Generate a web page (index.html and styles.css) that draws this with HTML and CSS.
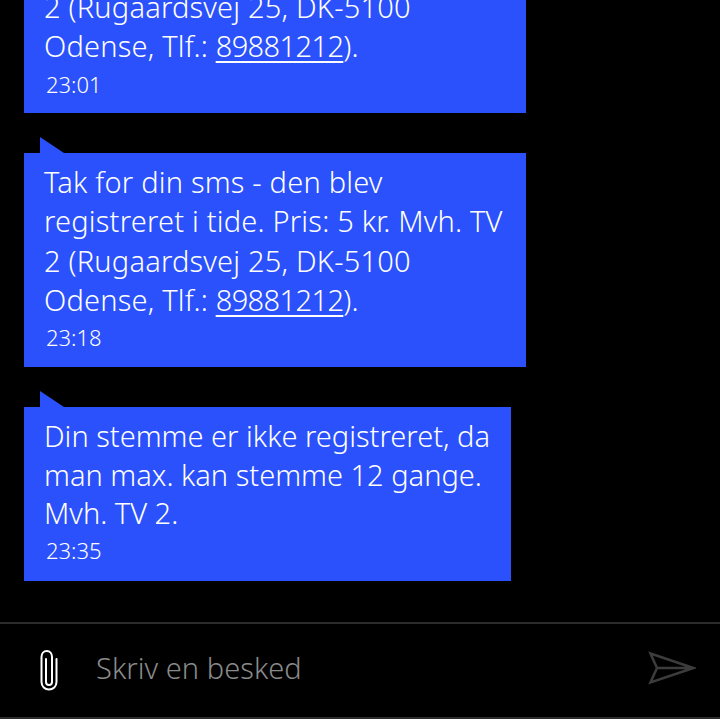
FILE: index.html
```html
<!DOCTYPE html>
<html lang="da">
<head>
<meta charset="utf-8">
<title>Beskeder</title>
<link rel="stylesheet" href="styles.css">
</head>
<body>
<main class="screen">
  <section class="thread">
    <article class="bubble partial">
      <p class="text">2 (Rugaardsvej 25, DK-5100<br>Odense, Tlf.: <span class="link">89881212</span>).</p>
      <time class="time">23:01</time>
    </article>
    <article class="bubble wide">
      <p class="text">Tak for din sms - den blev<br>registreret i tide. Pris: 5 kr. Mvh. TV<br>2 (Rugaardsvej 25, DK-5100<br>Odense, Tlf.: <span class="link">89881212</span>).</p>
      <time class="time">23:18</time>
    </article>
    <article class="bubble narrow">
      <p class="text">Din stemme er ikke registreret, da<br>man max. kan stemme 12 gange.<br>Mvh. TV 2.</p>
      <time class="time">23:35</time>
    </article>
  </section>
  <footer class="composer">
    <svg class="clip" width="24" height="42" viewBox="0 0 24 42" fill="none" stroke="#fff" stroke-width="2" stroke-linecap="round">
      <path d="M20.500 9V32C20.500 36.500 17 39.500 13 39.500S5.500 36.500 5.500 32V7C5.500 3.500 7.800 1 10.800 1S16 3.500 16 7V32C16 34 14.500 35 13 35S10 34 10 32V9"/>
    </svg>
    <span class="placeholder">Skriv en besked</span>
    <svg class="send" width="48" height="34" viewBox="0 0 48 34" fill="none" stroke="#3c3c3c" stroke-width="2.500" stroke-linejoin="miter">
      <path d="M2.500 2.500L45.500 17L2.500 31.500L9 17ZM9 17H45.500"/>
    </svg>
  </footer>
</main>
</body>
</html>
```
FILE: styles.css
```css
* { box-sizing: border-box; }
html, body { margin: 0; height: 100%; background: #000; }
body { font-family: "Noto Sans", "Open Sans", sans-serif; color: #fff; overflow: hidden; }
.screen { height: 719px; display: flex; flex-direction: column; }
.thread {
  flex: 1;
  min-height: 0;
  overflow: hidden;
  display: flex;
  flex-direction: column;
  justify-content: flex-end;
  align-items: flex-start;
  gap: 40px;
  padding: 0 0 41px 24px;
}
.bubble { position: relative; flex: none; background: #2a51fb; padding: 9px 20px 0 20px; }
.bubble::before {
  content: "";
  position: absolute;
  left: 16px;
  top: -16px;
  width: 0;
  height: 0;
  border-bottom: 16px solid #2a51fb;
  border-right: 24px solid transparent;
}
.partial { width: 502px; height: 135px; }
.wide { width: 502px; height: 214px; }
.narrow { width: 487px; height: 174px; padding-top: 10px; }
.text { margin: 0; font-size: 29px; line-height: 39.3px; letter-spacing: 0.2px; white-space: nowrap; font-weight: 300; }
.narrow .text { line-height: 38.7px; letter-spacing: 0; }
.link { letter-spacing: -0.6px; text-decoration: underline; text-underline-offset: 4px; text-decoration-thickness: 2px; }
.time { display: block; margin: 4px 0 0 2px; font-size: 22px; line-height: 28px; font-weight: 300; }
.narrow .time { margin-top: 3px; }
.composer {
  flex: none;
  height: 97px;
  border-top: 2px solid #2b2b2b;
  border-bottom: 2px solid #2b2b2b;
  display: flex;
  align-items: center;
  padding: 0 24px 0 36px;
}
.clip { flex: none; margin-top: 1px; }
.placeholder { flex: 1; margin: -6px 0 0 36px; font-size: 29px; letter-spacing: 0.05px; font-weight: 300; color: #8a8a8a; }
.send { flex: none; margin-top: -5px; }
```
